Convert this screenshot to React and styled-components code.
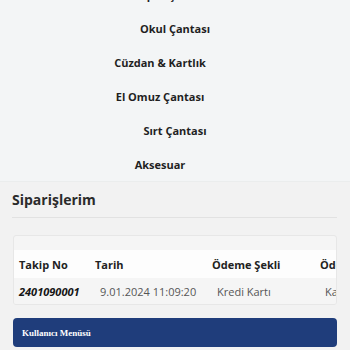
import React from 'react';
import styled, { createGlobalStyle } from 'styled-components';

const GlobalStyle = createGlobalStyle`
    html, body {
        margin: 0;
        padding: 0;
        background: #f2f2f2;
        font-family: "Open Sans", "Liberation Sans", sans-serif;
        overflow: hidden;
    }
`;

const Page = styled.div`
    width: 350px;
    height: 350px;
    overflow: hidden;
`;

const CategoryNav = styled.ul`
    list-style: none;
    margin: 0;
    padding: 0;
    margin-top: -23px;
    background: #f3f5f6;
    border-bottom: 1px solid #ebeded;
`;

const CategoryItem = styled.li`
    height: 34px;
    display: flex;
    align-items: center;
    justify-content: center;
    padding-right: ${props => props.$inset ? "30px" : "0"};
    font-size: 11px;
    font-weight: 700;
    color: #1f1f1f;
`;

const Section = styled.section`
    padding: 8px 13px 0 12px;
`;

const Title = styled.h2`
    margin: 0;
    padding-bottom: 7px;
    font-size: 14px;
    line-height: 20px;
    font-weight: 700;
    color: #2b2b2b;
    border-bottom: 1px solid #e2e2e2;
`;

const Card = styled.div`
    margin: 17px 0 0 1px;
    border: 1px solid #e7e7e7;
    border-radius: 3px;
    overflow: hidden;
    background: #f5f5f5;
    padding-top: 14px;
`;

const Row = styled.div`
    display: grid;
    grid-template-columns: 76px 117px 108px 80px;
    align-items: center;
    height: ${props => props.$head ? "28px" : "26px"};
    background: ${props => props.$head ? "#fdfdfd" : "#f5f5f5"};
    white-space: nowrap;
`;

const HeadCell = styled.div`
    padding-left: 5px;
    font-size: 11px;
    font-weight: 700;
    color: #222;
`;

const Cell = styled.div`
    padding-left: ${props => props.$first ? "5px" : "10px"};
    font-size: 11px;
    color: #555;
    ${props => props.$first && `
        font-weight: 700;
        font-style: italic;
        color: #151515;
    `}
`;

const MenuButton = styled.div`
    margin: 13px 0 0 1px;
    height: 29px;
    display: flex;
    align-items: center;
    padding-left: 9px;
    background: #1f3d7b;
    border-radius: 4px;
    color: #fff;
    font-family: "Liberation Serif", "Times New Roman", serif;
    font-size: 9px;
    font-weight: 700;
`;

const categories = [
    { name: "Spor Çantası", inset: false },
    { name: "Okul Çantası", inset: false },
    { name: "Cüzdan & Kartlık", inset: true },
    { name: "El Omuz Çantası", inset: true },
    { name: "Sırt Çantası", inset: false },
    { name: "Aksesuar", inset: true },
];

const App = () => {
    return (
        <Page>
            <GlobalStyle />
            <CategoryNav>
                {categories.map(c => (
                    <CategoryItem key={c.name} $inset={c.inset}>{c.name}</CategoryItem>
                ))}
            </CategoryNav>
            <Section>
                <Title>Siparişlerim</Title>
                <Card>
                    <Row $head>
                        <HeadCell>Takip No</HeadCell>
                        <HeadCell>Tarih</HeadCell>
                        <HeadCell>Ödeme Şekli</HeadCell>
                        <HeadCell>Ödeme Durumu</HeadCell>
                    </Row>
                    <Row>
                        <Cell $first>2401090001</Cell>
                        <Cell>9.01.2024 11:09:20</Cell>
                        <Cell>Kredi Kartı</Cell>
                        <Cell>Kapıda</Cell>
                    </Row>
                </Card>
                <MenuButton>Kullanıcı Menüsü</MenuButton>
            </Section>
        </Page>
    );
};

export default App;
